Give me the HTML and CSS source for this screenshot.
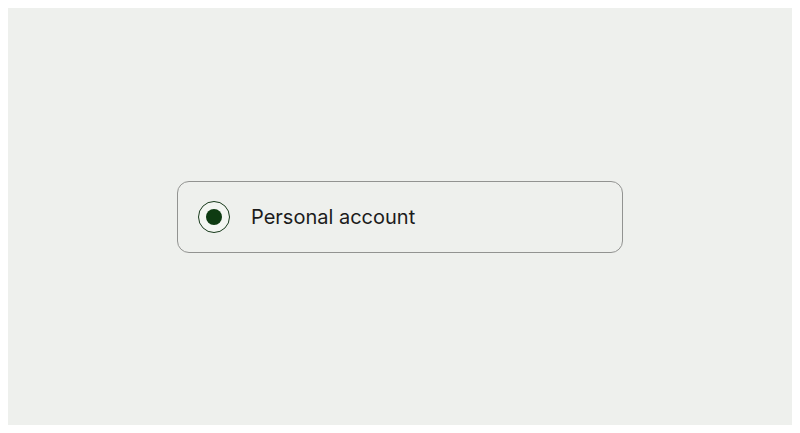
FILE: index.html
```html
<!DOCTYPE html>
<html>
<head>
<meta charset="utf-8">
<link rel="stylesheet" href="styles.css">
</head>
<body>
<main class="stage">
  <label class="option">
    <span class="radio"><span class="dot"></span></span>
    <span class="label">Personal account</span>
  </label>
</main>
</body>
</html>
```

FILE: styles.css
```css
html, body {
  margin: 0;
  background: #ffffff;
}
body {
  padding: 8px;
  height: 433px;
  box-sizing: border-box;
  font-family: Inter, "Noto Sans", sans-serif;
}
.stage {
  background: #eef0ed;
  width: 784px;
  height: 417px;
  display: flex;
  align-items: center;
  justify-content: center;
}
.option {
  width: 446px;
  height: 72px;
  box-sizing: border-box;
  border: 1.5px solid #929391;
  border-radius: 12px;
  display: flex;
  align-items: center;
  padding-left: 20px;
  gap: 21px;
}
.radio {
  width: 32px;
  height: 32px;
  box-sizing: border-box;
  border: 1.8px solid #183a1c;
  border-radius: 50%;
  background: #f3f6f2;
  display: flex;
  align-items: center;
  justify-content: center;
}
.dot {
  width: 16px;
  height: 16px;
  border-radius: 50%;
  background: #0e3b12;
}
.label {
  font-size: 20px;
  color: #1c1c1c;
  letter-spacing: 0;
}
```
